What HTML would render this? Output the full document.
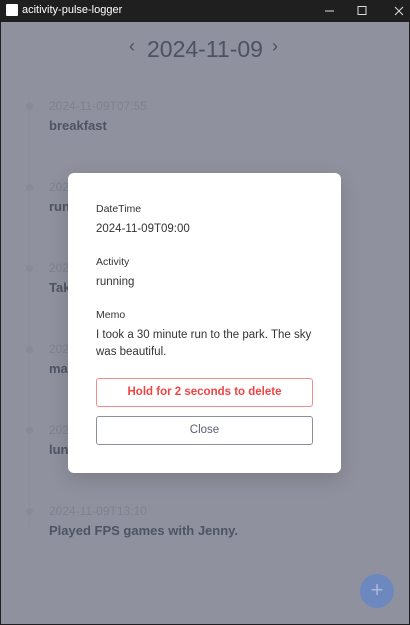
<!DOCTYPE html>
<html><head><style>
*{margin:0;padding:0;box-sizing:border-box}
body{width:410px;height:625px;overflow:hidden;background:#1f1f1f;font-family:"Liberation Sans",sans-serif;position:relative}
.tb{position:absolute;left:0;top:0;width:410px;height:22px;background:#1f1f1f;color:#fff;font-size:11px}
.tb .ic{position:absolute;left:6px;top:4px;width:12px;height:12px;background:#fff;border-radius:1px}
.tb .t{position:absolute;left:22px;top:4px}
.win{position:absolute;left:1px;top:22px;width:408px;height:602px;background:#8f929e;overflow:hidden}
.hdr{position:absolute;top:14px;left:0;width:408px;text-align:center;color:#4b5262;font-size:23px}
.ch{position:absolute;top:14px;font-size:18px;color:#4b5262}
.line{position:absolute;left:28px;top:68px;width:1px;height:440px;background:#8c8f9b}
.it{position:absolute;left:48px}
.it .d{font-size:12px;color:#7d8290}
.it .n{font-size:13px;color:#4d5464;font-weight:bold;margin-top:5px}
.dot{position:absolute;left:25px;top:0;width:7px;height:7px;border-radius:50%;background:#888b97}
.fab{position:absolute;left:359px;top:552px;width:34px;height:34px;border-radius:50%;background:#6d87bf;color:#aab8d8;text-align:center;line-height:32px;font-size:22px}
.m{position:absolute;left:68px;top:173px;width:273px;height:300px;background:#fff;border-radius:6px;box-shadow:0 6px 20px rgba(0,0,0,.15)}
.lb{position:absolute;left:28px;font-size:10.5px;color:#333}
.v{position:absolute;left:28px;font-size:11.5px;color:#333;line-height:17px;width:220px}
.b{position:absolute;left:28px;width:217px;height:29px;border-radius:3px;text-align:center;line-height:27px;font-size:11.5px}
</style></head><body>
<div class="tb"><div class="ic"></div><div class="t">acitivity-pulse-logger</div>
<svg style="position:absolute;left:325px;top:6px" width="80" height="10" fill="none" stroke="#ddd" stroke-width="1"><path d="M0 5h9"/><rect x="33" y="0.5" width="8" height="8"/><path d="M70 1l8 8M78 1l-8 8"/></svg></div>
<div class="win">
<div class="ch" style="left:128px">‹</div>
<div class="hdr">2024-11-09</div>
<div class="ch" style="left:271px">›</div>
<div class="line"></div>
<div class="dot" style="top:81px"></div><div class="it" style="top:77px"><div class="d">2024-11-09T07:55</div><div class="n">breakfast</div></div>
<div class="dot" style="top:162px"></div><div class="it" style="top:158px"><div class="d">2024-11-09T09:00</div><div class="n">running</div></div>
<div class="dot" style="top:243px"></div><div class="it" style="top:239px"><div class="d">2024-11-09T10:00</div><div class="n">Take</div></div>
<div class="dot" style="top:324px"></div><div class="it" style="top:320px"><div class="d">2024-11-09T11:00</div><div class="n">main</div></div>
<div class="dot" style="top:405px"></div><div class="it" style="top:401px"><div class="d">2024-11-09T12:00</div><div class="n">lunch</div></div>
<div class="dot" style="top:486px"></div><div class="it" style="top:482px"><div class="d">2024-11-09T13:10</div><div class="n">Played FPS games with Jenny.</div></div>
<div class="fab">+</div>
</div>
<div class="m">
<div class="lb" style="top:30px">DateTime</div>
<div class="v" style="top:48px">2024-11-09T09:00</div>
<div class="lb" style="top:83px">Activity</div>
<div class="v" style="top:101px">running</div>
<div class="lb" style="top:136px">Memo</div>
<div class="v" style="top:154px">I took a 30 minute run to the park. The sky was beautiful.</div>
<div class="b" style="top:205px;border:1px solid #f58a8a;color:#ef4444;font-weight:bold">Hold for 2 seconds to delete</div>
<div class="b" style="top:243px;border:1px solid #8a8f9a;color:#5a6070">Close</div>
</div>
</body></html>
